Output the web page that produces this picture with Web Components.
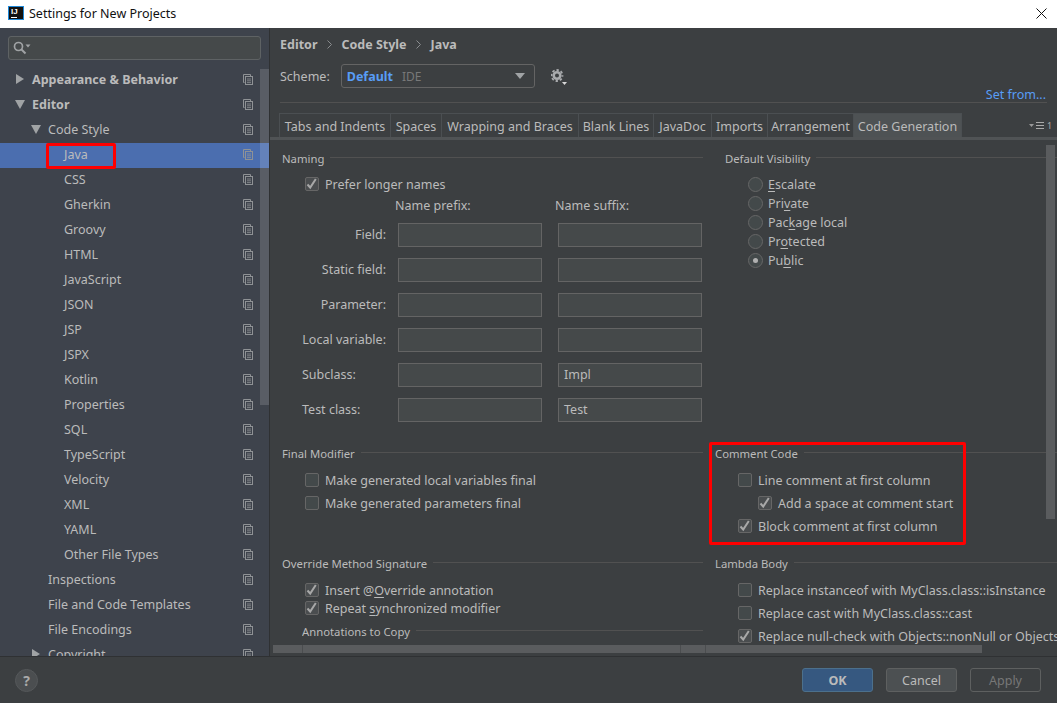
<!DOCTYPE html>
<html>
<head>
<meta charset="utf-8">
<title>Settings for New Projects</title>
<style>
  html, body { margin: 0; height: 100%; overflow: hidden; background: #3c3f41; }
  body { font: 12.5px "Noto Sans", "Open Sans", sans-serif; color: #bbb; }
  u { text-underline-offset: 2px; }
</style>
</head>
<body>
<settings-dialog>
  <title-bar slot="title">Settings for New Projects</title-bar>

  <settings-tree slot="tree">
    <tree-item level="0" arrow="right" bold>Appearance &amp; Behavior</tree-item>
    <tree-item level="0" arrow="down" bold>Editor</tree-item>
    <tree-item level="1" arrow="down">Code Style</tree-item>
    <tree-item level="2" selected>Java</tree-item>
    <tree-item level="2">CSS</tree-item>
    <tree-item level="2">Gherkin</tree-item>
    <tree-item level="2">Groovy</tree-item>
    <tree-item level="2">HTML</tree-item>
    <tree-item level="2">JavaScript</tree-item>
    <tree-item level="2">JSON</tree-item>
    <tree-item level="2">JSP</tree-item>
    <tree-item level="2">JSPX</tree-item>
    <tree-item level="2">Kotlin</tree-item>
    <tree-item level="2">Properties</tree-item>
    <tree-item level="2">SQL</tree-item>
    <tree-item level="2">TypeScript</tree-item>
    <tree-item level="2">Velocity</tree-item>
    <tree-item level="2">XML</tree-item>
    <tree-item level="2">YAML</tree-item>
    <tree-item level="2">Other File Types</tree-item>
    <tree-item level="1">Inspections</tree-item>
    <tree-item level="1">File and Code Templates</tree-item>
    <tree-item level="1">File Encodings</tree-item>
    <tree-item level="1" arrow="right">Copyright</tree-item>
  </settings-tree>

  <scheme-header slot="header"></scheme-header>

  <tab-strip slot="tabs">
    <tab-item w="112">Tabs and Indents</tab-item>
    <tab-item w="51">Spaces</tab-item>
    <tab-item w="137">Wrapping and Braces</tab-item>
    <tab-item w="75">Blank Lines</tab-item>
    <tab-item w="58">JavaDoc</tab-item>
    <tab-item w="56">Imports</tab-item>
    <tab-item w="86">Arrangement</tab-item>
    <tab-item w="108" active>Code Generation</tab-item>
  </tab-strip>

  <code-generation slot="content">
    <option-group heading="Naming">
      <check-row checked style="margin-top:-1px">Prefer longer names</check-row>
      <naming-table></naming-table>
    </option-group>
    <option-group heading="Default Visibility" style="margin-left:10px">
      <div style="display:flex;flex-direction:column;gap:1px;margin-top:-1px">
        <radio-row><u>E</u>scalate</radio-row>
        <radio-row>Pri<u>v</u>ate</radio-row>
        <radio-row>Pac<u>k</u>age local</radio-row>
        <radio-row>Pr<u>o</u>tected</radio-row>
        <radio-row checked>Pu<u>b</u>lic</radio-row>
      </div>
    </option-group>

    <option-group heading="Final Modifier">
      <div style="display:flex;flex-direction:column;gap:5px">
        <check-row>Make generated local variables final</check-row>
        <check-row>Make generated parameters final</check-row>
      </div>
    </option-group>
    <option-group heading="Comment Code">
      <div style="display:flex;flex-direction:column;gap:5px">
        <check-row>Line comment at first column</check-row>
        <check-row checked nested>Add a space at comment start</check-row>
        <check-row checked>Block comment at first column</check-row>
      </div>
    </option-group>

    <option-group heading="Override Method Signature">
      <check-row checked>Insert @<u>O</u>verride annotation</check-row>
      <check-row checked>Repeat <u>s</u>ynchronized modifier</check-row>
      <option-group heading="Annotations to Copy" sub></option-group>
    </option-group>
    <option-group heading="Lambda Body">
      <div style="display:flex;flex-direction:column;gap:5px">
        <check-row>Replace instanceof with MyClass.class::isInstance</check-row>
        <check-row>Replace cast with MyClass.class::cast</check-row>
        <check-row checked>Replace null-check with Objects::nonNull or Objects</check-row>
      </div>
    </option-group>
  </code-generation>

  <dialog-buttons slot="footer"></dialog-buttons>
</settings-dialog>

<script>
const COPY_ICON = `<svg width="10" height="11" viewBox="0 0 10 11" fill="none" stroke="#8f9295" stroke-width="1">
  <path d="M1.500 8.500h-1v-8h7v1.500"/><rect x="2.500" y="2.500" width="7" height="8"/><path d="M4 5h4M4 6.800h4M4 8.600h4" stroke-width=".8"/></svg>`;

class SettingsDialog extends HTMLElement {
  constructor() {
    super();
    this.attachShadow({ mode: 'open' }).innerHTML = `
      <style>
        :host { display: flex; flex-direction: column; width: 1057px; height: 703px; position: relative; overflow: hidden; }
        .body { flex: 1; display: flex; min-height: 0; }
        .side { width: 269px; flex: none; border-right: 1px solid #2f3133; background: #3e434c; }
        .main { flex: 1; min-width: 0; display: flex; flex-direction: column; position: relative; }
        .foot { height: 46px; flex: none; border-top: 1px solid #2f3133; }
        .vbar { position: absolute; left: 776px; top: 117px; width: 9px; height: 374px; background: #5a5c5e; }
        .hbar { position: absolute; left: 3px; top: 617px; width: 709px; height: 8px; background: #5a5c5e; }
        .hbar i { position: absolute; top: 0; bottom: 0; width: 1px; background: #4b4d4f; }
        .mark { position: absolute; border: 3px solid #f00; border-radius: 2px; box-sizing: border-box; }
      </style>
      <slot name="title"></slot>
      <div class="body">
        <div class="side"><slot name="tree"></slot></div>
        <div class="main">
          <slot name="header"></slot>
          <slot name="tabs"></slot>
          <slot name="content"></slot>
          <div class="vbar"></div>
          <div class="hbar"><i style="left:29px"></i><i style="left:407px"></i><i style="left:432px"></i></div>
        </div>
      </div>
      <div class="foot"><slot name="footer"></slot></div>
      <div class="mark" style="left:46px;top:143px;width:70px;height:26px"></div>
      <div class="mark" style="left:709px;top:442px;width:257px;height:103px"></div>`;
  }
}

class TitleBar extends HTMLElement {
  constructor() {
    super();
    this.attachShadow({ mode: 'open' }).innerHTML = `
      <style>
        :host { display: flex; align-items: center; height: 28px; box-sizing: border-box; flex: none; background: #fff; color: #111; font-size: 12.5px; padding: 0 10px 2px 8px; }
        .logo { width: 16px; height: 14px; margin-right: 5px; background: #111; border: 1px solid #1e88d8; box-sizing: border-box; color: #fff; font: bold 8px/9px "Liberation Sans", sans-serif; padding-left: 2px; position: relative; }
        .logo::after { content: ""; position: absolute; left: 2px; bottom: 1px; width: 6px; height: 1px; background: #fff; }
        .txt { flex: 1; }
      </style>
      <div class="logo">IJ</div>
      <div class="txt"><slot></slot></div>
      <svg width="11" height="11" viewBox="0 0 11 11" stroke="#111" stroke-width="1" fill="none"><path d="M.5.5l10 10M10.500.5l-10 10"/></svg>`;
  }
}

class SettingsTree extends HTMLElement {
  constructor() {
    super();
    this.attachShadow({ mode: 'open' }).innerHTML = `
      <style>
        :host { display: block; height: 628px; overflow: hidden; position: relative; }
        .search { height: 24px; margin: 8px 8px 8px; box-sizing: border-box; border: 1px solid #5e6264; border-radius: 3px; background: #45494a; display: flex; align-items: center; padding-left: 4px; }
        .bar { position: absolute; left: 260px; top: 41px; width: 9px; height: 336px; background: rgba(255,255,255,.14); }
      </style>
      <div class="search">
        <svg width="18" height="14" viewBox="0 0 18 14" fill="none" stroke="#a0a3a5" stroke-width="1.700"><circle cx="5.500" cy="5.500" r="4"/><path d="M8.500 8.500l4 4" stroke-width="2"/><path d="M12.500 3.500h5l-2.500 3z" fill="#a0a3a5" stroke="none"/></svg>
      </div>
      <slot></slot>
      <div class="bar"></div>`;
  }
}

class TreeItem extends HTMLElement {
  connectedCallback() {
    if (this.shadowRoot) return;
    const level = +this.getAttribute('level');
    const arrow = this.getAttribute('arrow');
    const shapes = { right: 'M1 1l8 5-8 5z', down: 'M0 2h10l-5 9z' };
    this.attachShadow({ mode: 'open' }).innerHTML = `
      <style>
        :host { display: flex; align-items: center; height: 25px; box-sizing: border-box; position: relative; padding: 0 16px 2px ${32 + level * 16}px; }
        :host([selected]) { background: #4b6eaf; }
        :host([bold]) { font-weight: 700; }
        .txt { flex: 1; white-space: nowrap; }
        .arrow { position: absolute; left: ${15 + level * 16}px; top: 5px; }
      </style>
      ${arrow ? `<svg class="arrow" width="10" height="12" viewBox="0 0 10 12" fill="#a0a3a5"><path d="${shapes[arrow]}"/></svg>` : ''}
      <div class="txt"><slot></slot></div>
      ${COPY_ICON}`;
  }
}

class SchemeHeader extends HTMLElement {
  constructor() {
    super();
    this.attachShadow({ mode: 'open' }).innerHTML = `
      <style>
        :host { display: block; padding: 0 10px; flex: none; }
        .crumbs { height: 32px; display: flex; align-items: center; font-weight: 700; gap: 9.5px; }
        .crumbs svg { flex: none; }
        .scheme { height: 32px; display: flex; align-items: center; }
        .combo { width: 194px; height: 24px; margin-left: 11px; box-sizing: border-box; border: 1px solid #646464; border-radius: 3px; background: #3c3f41; display: flex; align-items: center; padding: 0 9px 0 5px; }
        .combo b { color: #589df6; margin-right: 9px; }
        .combo span { color: #787878; flex: 1; font-size: 12px; }
        .gear { margin-left: 16px; }
        .from { height: 15px; margin-top: -4px; line-height: 14px; text-align: right; color: #589df6; padding-right: 1px; border-bottom: 1px solid #515151; width: 767px; box-sizing: border-box; }
      </style>
      <div class="crumbs">
        <span>Editor</span>
        <svg width="5" height="9" viewBox="0 0 5 9" fill="none" stroke="#8a8d8f"><path d="M.5.5l4 4-4 4"/></svg>
        <span>Code Style</span>
        <svg width="5" height="9" viewBox="0 0 5 9" fill="none" stroke="#8a8d8f"><path d="M.5.5l4 4-4 4"/></svg>
        <span>Java</span>
      </div>
      <div class="scheme">
        <span>Scheme:</span>
        <div class="combo"><b>Default</b><span>IDE</span>
          <svg width="10" height="6" viewBox="0 0 10 6" fill="#a0a3a5"><path d="M0 0h10L5 6z"/></svg>
        </div>
        <svg class="gear" width="16" height="18" viewBox="0 0 16 18" fill="none" stroke="#a9abad">
          <circle cx="6" cy="8.500" r="3.300" stroke-width="2.600"/>
          <circle cx="6" cy="8.500" r="5.500" stroke-width="1.800" stroke-dasharray="2.400 1.920" stroke-dashoffset="1.200"/>
          <path d="M11 15h5l-2.500 3z" fill="#d8d8d8" stroke="none"/>
        </svg>
      </div>
      <div class="from">Set from...</div>`;
  }
}

class TabStrip extends HTMLElement {
  constructor() {
    super();
    this.attachShadow({ mode: 'open' }).innerHTML = `
      <style>
        :host { display: flex; flex: none; margin-top: 10px; height: 24px; padding-left: 9px; border-bottom: 3px solid #505355; position: relative; }
        svg { position: absolute; right: 4px; top: 8px; overflow: visible; }
        text { font: 9px "Noto Sans", sans-serif; fill: #aaa; }
      </style>
      <slot></slot>
      <svg width="24" height="10" viewBox="0 0 24 10">
        <path d="M0 3h5L2.500 6z" fill="#999"/>
        <path d="M7 1.500h8M7 4.500h8M7 7.500h8" stroke="#aaa"/>
        <text x="18" y="8">1</text>
      </svg>`;
  }
}

class TabItem extends HTMLElement {
  connectedCallback() {
    if (this.shadowRoot) return;
    this.attachShadow({ mode: 'open' }).innerHTML = `
      <style>
        :host { display: flex; align-items: center; justify-content: center; box-sizing: border-box; height: 24px; padding-top: 2px; width: ${this.getAttribute('w')}px; border: 1px solid #4b4f52; border-width: 1px 1px 0 0; white-space: nowrap; }
        :host(:first-child) { border-left-width: 1px; }
        :host([active]) { background: #4e5254; }
      </style>
      <slot></slot>`;
  }
}

class CodeGeneration extends HTMLElement {
  constructor() {
    super();
    this.attachShadow({ mode: 'open' }).innerHTML = `
      <style>
        :host { display: grid; flex: 1; min-height: 0; overflow: hidden; box-sizing: border-box; padding: 10px 0 0 12px; grid-template-columns: 421px 342px; column-gap: 12px; grid-template-rows: 295px 110px 1fr; }
      </style>
      <slot></slot>`;
  }
}

class OptionGroup extends HTMLElement {
  connectedCallback() {
    if (this.shadowRoot) return;
    this.attachShadow({ mode: 'open' }).innerHTML = `
      <style>
        :host { display: block; min-width: 0; overflow: hidden; }
        :host([sub]) { margin: 6px 0 0 20px; }
        .head { display: flex; align-items: center; height: 18px; box-sizing: border-box; padding-bottom: 2px; font-size: 11.3px; white-space: nowrap; }
        .head::after { content: ""; flex: 1; height: 1px; background: #515151; margin-left: 6px; transform: translateY(-1px); }
        .body { padding-top: 8px; }
        :host([sub]) .body { display: none; }
      </style>
      <div class="head">${this.getAttribute('heading')}</div>
      <div class="body"><slot></slot></div>`;
  }
}

class CheckRow extends HTMLElement {
  connectedCallback() {
    if (this.shadowRoot) return;
    const on = this.hasAttribute('checked');
    this.attachShadow({ mode: 'open' }).innerHTML = `
      <style>
        :host { display: flex; align-items: center; height: 18px; padding-left: 23px; white-space: nowrap; }
        :host([nested]) { padding-left: 43px; }
        .box { width: 14px; height: 14px; margin-right: 6px; flex: none; box-sizing: border-box; border: 1px solid #666; border-radius: 2px; background: #43494a; }
        :host([checked]) .box { background: #4a4d4f; }
        svg { display: block; }
      </style>
      <div class="box">${on ? '<svg width="12" height="12" viewBox="0 0 12 12" fill="none" stroke="#a8a8a8" stroke-width="2"><path d="M1.500 6.500l2.700 3 5.600-8.500"/></svg>' : ''}</div>
      <span><slot></slot></span>`;
  }
}

class RadioRow extends HTMLElement {
  connectedCallback() {
    if (this.shadowRoot) return;
    this.attachShadow({ mode: 'open' }).innerHTML = `
      <style>
        :host { display: flex; align-items: center; height: 18px; padding-left: 23px; white-space: nowrap; }
        .dot { width: 15px; height: 15px; margin-right: 5px; flex: none; box-sizing: border-box; border: 1px solid #666; border-radius: 50%; background: #43494a; display: flex; align-items: center; justify-content: center; }
        :host([checked]) .dot::after { content: ""; width: 5px; height: 5px; border-radius: 50%; background: #b0b0b0; }
      </style>
      <div class="dot"></div>
      <span><slot></slot></span>`;
  }
}

class NamingTable extends HTMLElement {
  constructor() {
    super();
    const rows = [['Field:'], ['Static field:'], ['Parameter:'], ['Local variable:'], ['Subclass:', 'Impl', 1], ['Test class:', 'Test', 1]];
    this.attachShadow({ mode: 'open' }).innerHTML = `
      <style>
        :host { display: grid; grid-template-columns: 104px 144px 148px; column-gap: 12px; row-gap: 11px; grid-template-rows: 13px; grid-auto-rows: 24px; margin-top: 6px; align-items: center; white-space: nowrap; }
        .h { margin-left: -3px; line-height: 14px; align-self: start; }
        .l { text-align: right; margin-top: -2px; }
        .l.left { text-align: left; padding-left: 20px; }
        .i { height: 24px; box-sizing: border-box; border: 1px solid #646464; background: #45494a; padding-left: 5px; line-height: 22px; }
        .gap { margin-left: 4px; }
      </style>
      <div></div><div class="h">Name prefix:</div><div class="h" style="margin-left:1px">Name suffix:</div>
      ${rows.map(([label, suffix, left]) => `<div class="l${left ? ' left' : ''}">${label}</div><div class="i"></div><div class="i gap">${suffix || ''}</div>`).join('')}`;
  }
}

class DialogButtons extends HTMLElement {
  constructor() {
    super();
    this.attachShadow({ mode: 'open' }).innerHTML = `
      <style>
        :host { display: flex; align-items: center; height: 100%; padding: 0 16px 0 15px; gap: 13px; }
        .help { width: 23px; height: 23px; border-radius: 50%; background: #4b4e50; border: 1px solid #55585a; box-sizing: border-box; display: flex; align-items: center; justify-content: center; font-weight: 700; font-size: 14px; color: #aaa; margin-right: auto; }
        button { width: 71px; height: 24px; box-sizing: border-box; font: inherit; color: #bbb; background: #4c5052; border: 1px solid #5e6060; border-radius: 3px; padding: 0; }
        .ok { background: #365880; border-color: #4c708c; font-weight: 700; }
        .off { background: transparent; color: #777; border-color: #5e6060; }
      </style>
      <div class="help">?</div>
      <button class="ok">OK</button>
      <button>Cancel</button>
      <button class="off">Apply</button>`;
  }
}

customElements.define('settings-dialog', SettingsDialog);
customElements.define('title-bar', TitleBar);
customElements.define('settings-tree', SettingsTree);
customElements.define('tree-item', TreeItem);
customElements.define('scheme-header', SchemeHeader);
customElements.define('tab-strip', TabStrip);
customElements.define('tab-item', TabItem);
customElements.define('code-generation', CodeGeneration);
customElements.define('option-group', OptionGroup);
customElements.define('check-row', CheckRow);
customElements.define('radio-row', RadioRow);
customElements.define('naming-table', NamingTable);
customElements.define('dialog-buttons', DialogButtons);
</script>
</body>
</html>
